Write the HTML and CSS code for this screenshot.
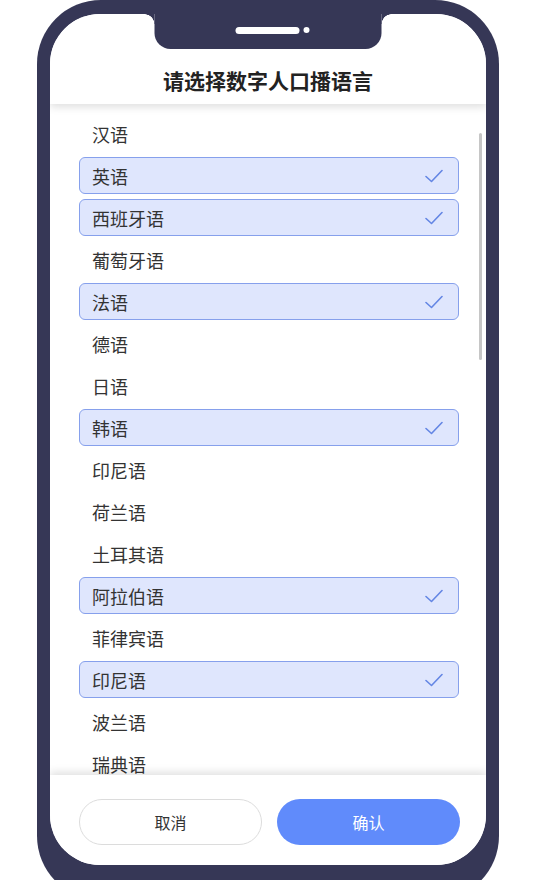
FILE: index.html
```html
<!DOCTYPE html>
<html lang="zh">
<head>
<meta charset="utf-8">
<title>请选择数字人口播语言</title>
<link rel="stylesheet" href="styles.css">
</head>
<body>
<div class="phone">
  <div class="screen">
    <div class="notch"><span class="speaker"></span><span class="camera"></span></div>
    <header class="header"><h1 class="title">请选择数字人口播语言</h1></header>
    <div class="list-wrap">
      <ul class="list">
        <li class="item">汉语</li>
        <li class="item selected">英语<svg class="check" viewBox="0 0 18 14"><polyline points="1,7.5 6.5,12.5 17,1.5"/></svg></li>
        <li class="item selected">西班牙语<svg class="check" viewBox="0 0 18 14"><polyline points="1,7.5 6.5,12.5 17,1.5"/></svg></li>
        <li class="item">葡萄牙语</li>
        <li class="item selected">法语<svg class="check" viewBox="0 0 18 14"><polyline points="1,7.5 6.5,12.5 17,1.5"/></svg></li>
        <li class="item">德语</li>
        <li class="item">日语</li>
        <li class="item selected">韩语<svg class="check" viewBox="0 0 18 14"><polyline points="1,7.5 6.5,12.5 17,1.5"/></svg></li>
        <li class="item">印尼语</li>
        <li class="item">荷兰语</li>
        <li class="item">土耳其语</li>
        <li class="item selected">阿拉伯语<svg class="check" viewBox="0 0 18 14"><polyline points="1,7.5 6.5,12.5 17,1.5"/></svg></li>
        <li class="item">菲律宾语</li>
        <li class="item selected">印尼语<svg class="check" viewBox="0 0 18 14"><polyline points="1,7.5 6.5,12.5 17,1.5"/></svg></li>
        <li class="item">波兰语</li>
        <li class="item">瑞典语</li>
      </ul>
      <div class="scrollbar"></div>
    </div>
    <footer class="footer">
      <button class="btn btn-cancel">取消</button>
      <button class="btn btn-ok">确认</button>
    </footer>
  </div>
</div>
</body>
</html>
```
FILE: styles.css
```css
* { box-sizing: border-box; }
html, body { margin: 0; padding: 0; background: #fff; }
body {
  font-family: "Noto Sans CJK SC", "Noto Sans", sans-serif;
  width: 536px;
  height: 880px;
  overflow: hidden;
}
.phone {
  width: 462px;
  height: 900px;
  margin: 0 auto;
  background: #363756;
  border-radius: 64px;
  padding: 14px 13px 0 13px;
}
.screen {
  position: relative;
  height: 851px;
  background: #fff;
  border-radius: 50px;
  overflow: hidden;
  display: flex;
  flex-direction: column;
}
.notch {
  position: absolute;
  top: 0;
  left: 50%;
  transform: translateX(-50%);
  width: 227px;
  height: 35px;
  background: #363756;
  border-radius: 0 0 16px 16px;
  z-index: 5;
  display: flex;
  align-items: center;
  justify-content: center;
  gap: 4px;
  padding-bottom: 3px;
  padding-left: 8px;
}
.notch::before, .notch::after {
  content: "";
  position: absolute;
  top: 0;
  width: 10px;
  height: 10px;
}
.notch::before {
  left: -10px;
  background: radial-gradient(circle at 0 100%, transparent 9.5px, #363756 10px);
}
.notch::after {
  right: -10px;
  background: radial-gradient(circle at 100% 100%, transparent 9.5px, #363756 10px);
}
.speaker {
  width: 64px;
  height: 7px;
  border-radius: 4px;
  background: #fff;
}
.camera {
  width: 6px;
  height: 6px;
  border-radius: 50%;
  background: #fff;
}
.header {
  position: relative;
  z-index: 3;
  height: 90px;
  flex: none;
  padding-top: 52px;
  background: #fff;
  box-shadow: 0 3px 8px rgba(0, 0, 0, 0.13);
}
.title {
  margin: 0;
  text-align: center;
  font-size: 21px;
  line-height: 28px;
  font-weight: 700;
  color: #222;
}
.list-wrap {
  position: relative;
  flex: 1;
  overflow: hidden;
}
.list {
  list-style: none;
  margin: 0;
  padding: 11px 27px 0 29px;
}
.item {
  height: 37px;
  margin-bottom: 5px;
  display: flex;
  align-items: center;
  justify-content: space-between;
  padding: 0 15px 0 12px;
  font-size: 18px;
  color: #333;
  border: 1px solid transparent;
  border-radius: 6px;
}
.item.selected {
  background: #dfe6fd;
  border-color: #86a0ec;
}
.check {
  width: 18px;
  height: 14px;
  fill: none;
  stroke: #6486e4;
  stroke-width: 1.6;
  stroke-linecap: round;
  stroke-linejoin: round;
}
.scrollbar {
  position: absolute;
  top: 29px;
  right: 4px;
  width: 3px;
  height: 227px;
  border-radius: 2px;
  background: #c6c6c6;
}
.footer {
  position: relative;
  z-index: 3;
  height: 90px;
  flex: none;
  background: #fff;
  box-shadow: 0 -3px 8px rgba(0, 0, 0, 0.12);
  display: flex;
  gap: 15px;
  padding: 24px 25px 0 29px;
}
.btn {
  width: 183px;
  height: 46px;
  border-radius: 23px;
  font-family: inherit;
  font-size: 16px;
  cursor: pointer;
}
.btn-cancel {
  background: #fff;
  border: 1px solid #dcdcdc;
  color: #333;
}
.btn-ok {
  background: #608bfb;
  border: none;
  color: #fff;
}
```
